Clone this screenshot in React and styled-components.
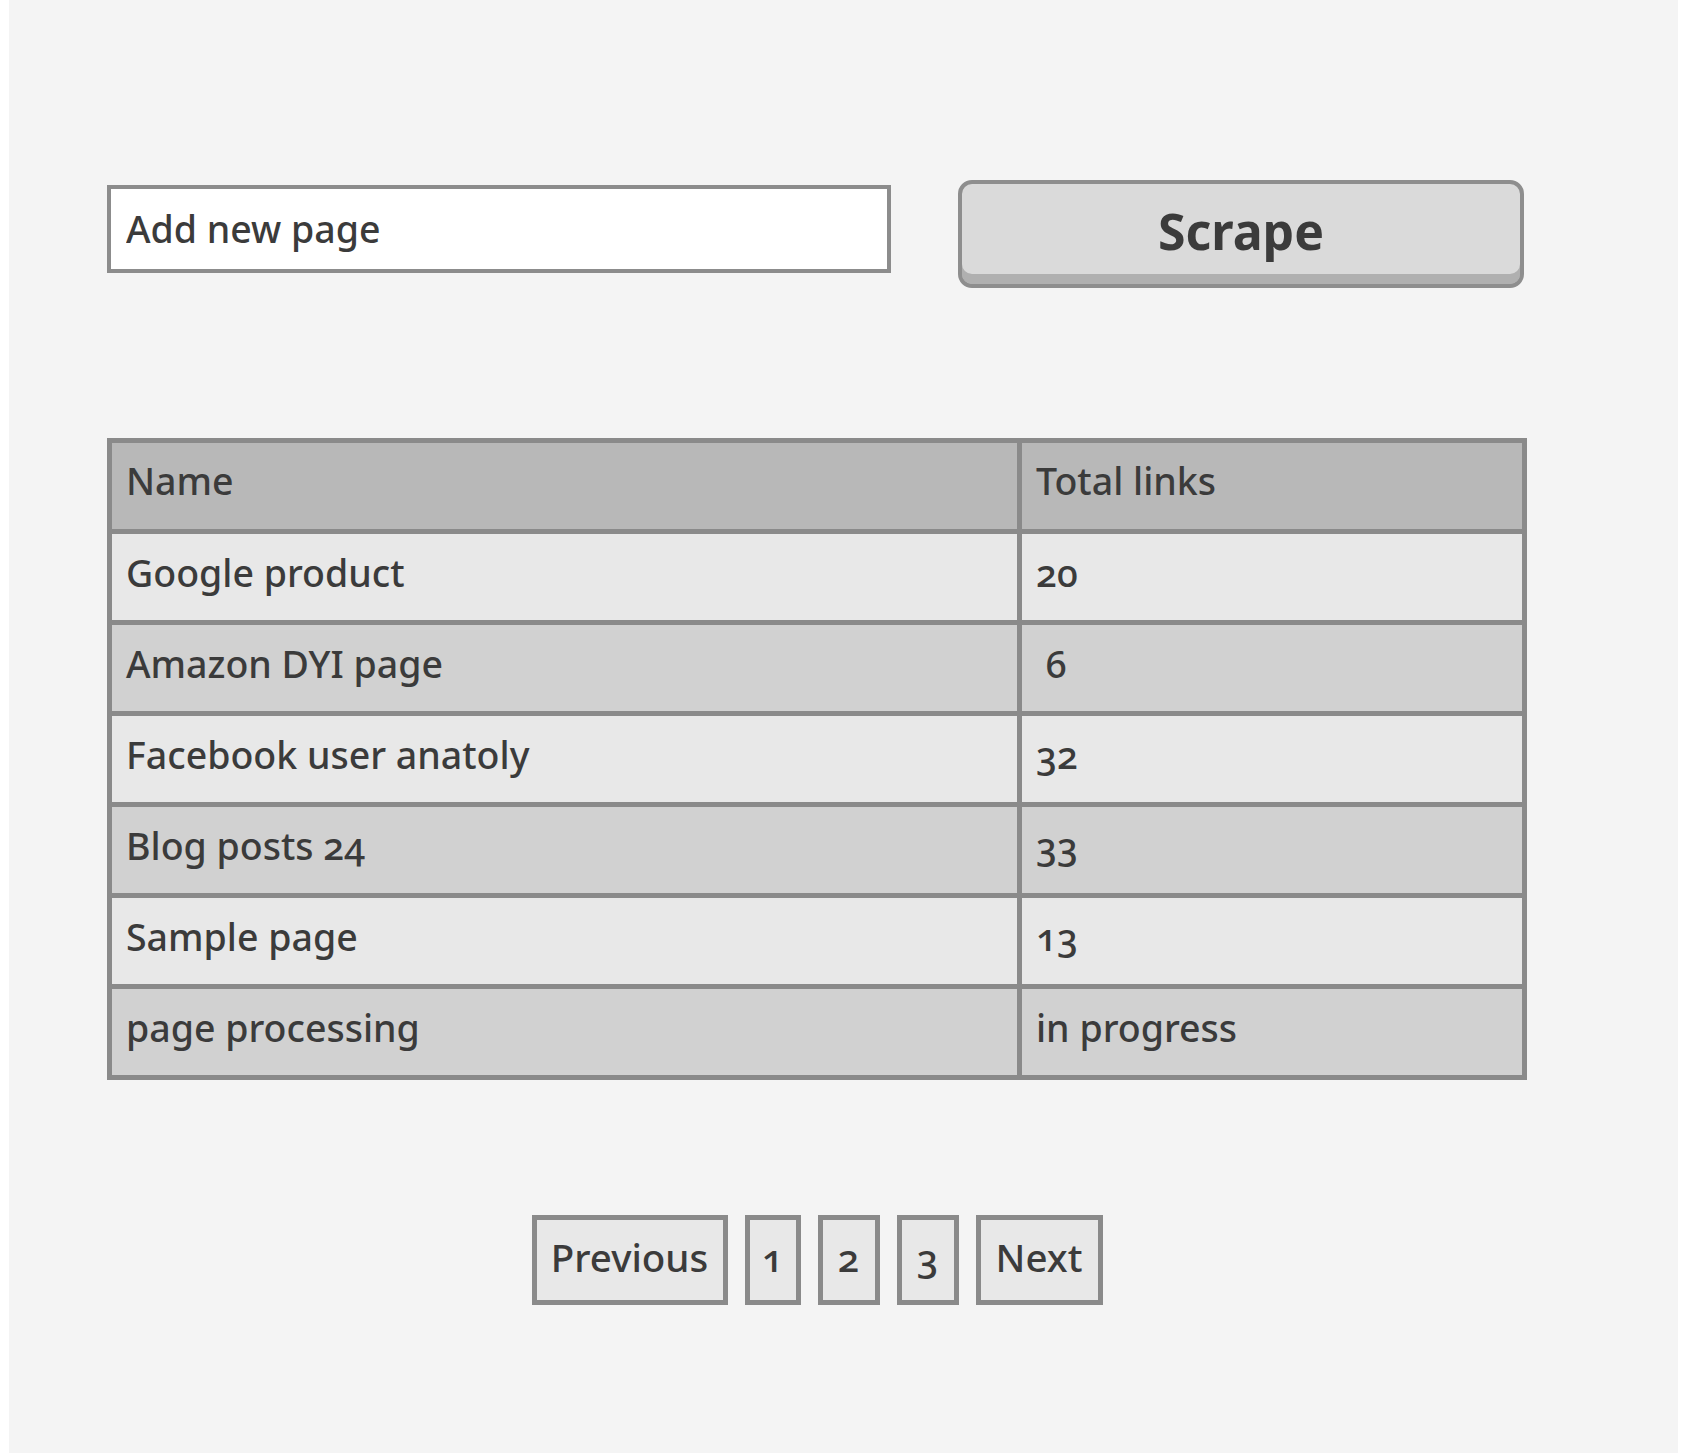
import styled, { createGlobalStyle } from "styled-components";

const GlobalStyle = createGlobalStyle`
  * {
    box-sizing: border-box;
  }
  body {
    margin: 0;
    background: #ffffff;
    font-family: "Noto Sans", "Open Sans", sans-serif;
    color: #3b3b3b;
  }
`;

const rows = [
  { name: "Google product", links: "20" },
  { name: "Amazon DYI page", links: " 6" },
  { name: "Facebook user anatoly", links: "32" },
  { name: "Blog posts 24", links: "33" },
  { name: "Sample page", links: "13" },
  { name: "page processing", links: "in progress" },
];

const pages = [
  { label: "Previous", width: 196 },
  { label: "1", width: 56 },
  { label: "2", width: 62 },
  { label: "3", width: 62 },
  { label: "Next", width: 127 },
];

const App = () => {
  return (
    <>
      <GlobalStyle />
      <Canvas>
        <Content>
          <TopBar>
            <PageInput placeholder="Add new page" />
            <ScrapeButton>Scrape</ScrapeButton>
          </TopBar>
          <Table>
            <thead>
              <tr>
                <HeadCell $wide>Name</HeadCell>
                <HeadCell>Total links</HeadCell>
              </tr>
            </thead>
            <tbody>
              {rows.map((row, i) => (
                <Row key={row.name} $dark={i % 2 === 1}>
                  <Cell>{row.name}</Cell>
                  <Cell>{row.links}</Cell>
                </Row>
              ))}
            </tbody>
          </Table>
          <Pagination>
            {pages.map((p) => (
              <PageButton key={p.label} $width={p.width}>
                {p.label}
              </PageButton>
            ))}
          </Pagination>
        </Content>
      </Canvas>
    </>
  );
};

export default App;

const Canvas = styled.div`
  margin-left: 9px;
  width: 1669px;
  height: 1453px;
  background: #f4f4f4;
  overflow: hidden;
`;

const Content = styled.div`
  width: 1420px;
  margin-left: 98px;
  padding-top: 180px;
  display: flex;
  flex-direction: column;
`;

const TopBar = styled.div`
  display: flex;
  align-items: flex-start;
  justify-content: space-between;
`;

const PageInput = styled.input`
  width: 784px;
  height: 88px;
  margin-top: 5px;
  border: 4px solid #8c8c8c;
  background: #ffffff;
  padding: 0 15px 2px;
  font-family: "Noto Sans", sans-serif;
  font-size: 37.5px;
  font-weight: 500;
  color: #3b3b3b;
  outline: none;

  &::placeholder {
    color: #3b3b3b;
    opacity: 1;
  }
`;

const ScrapeButton = styled.button`
  width: 566px;
  height: 108px;
  margin-right: 3px;
  border: 4px solid #8e8e8e;
  border-radius: 14px;
  background: #dadada;
  box-shadow: inset 0 -10px 0 #b0b0b0;
  padding: 0 0 6px;
  font-family: "Noto Sans", sans-serif;
  font-weight: 700;
  font-size: 50px;
  color: #3b3b3b;
`;

const Table = styled.table`
  margin-top: 150px;
  width: 1420px;
  border-collapse: collapse;
  border: 5px solid #8a8a8a;
  font-size: 37.5px;
  font-weight: 500;
  font-variant-numeric: oldstyle-nums;
`;

const HeadCell = styled.th`
  width: ${(p) => (p.$wide ? "910px" : "auto")};
  height: 91px;
  background: #b8b8b8;
  border: 5px solid #8a8a8a;
  padding: 0 14px 12px;
  text-align: left;
  font-weight: 500;
`;

const Row = styled.tr`
  background: ${(p) => (p.$dark ? "#d1d1d1" : "#e8e8e8")};
`;

const Cell = styled.td`
  height: 91px;
  border: 5px solid #8a8a8a;
  padding: 0 14px 10px;
  white-space: pre;
`;

const Pagination = styled.div`
  margin-top: 135px;
  display: flex;
  justify-content: center;
  gap: 17px;
`;

const PageButton = styled.button`
  width: ${(p) => p.$width}px;
  height: 90px;
  padding: 0 0 6px;
  border: 5px solid #8a8a8a;
  background: #e8e8e8;
  font-family: "Noto Sans", sans-serif;
  font-size: 38.5px;
  font-weight: 500;
  font-variant-numeric: oldstyle-nums;
  color: #3b3b3b;
`;
